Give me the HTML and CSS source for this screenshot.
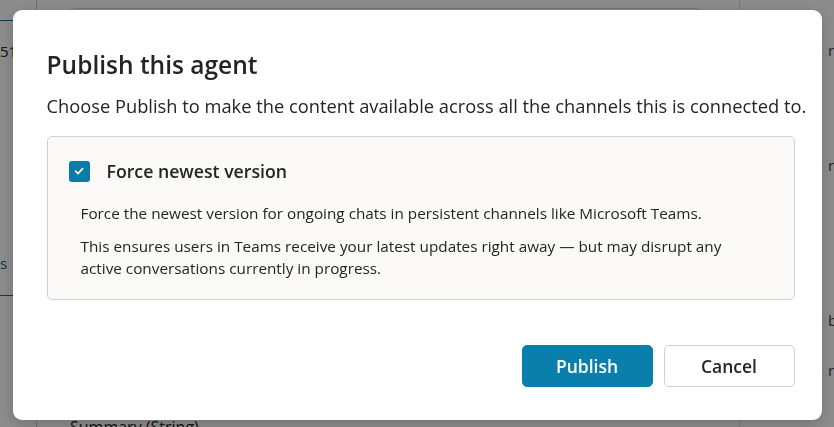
FILE: index.html
```html
<!DOCTYPE html>
<html>
<head>
    <meta charset="utf-8" />
    <title>Publish this agent</title>
    <link rel="stylesheet" href="styles.css">
</head>
<body>
    <!-- page behind the dialog -->
    <div class="pagina">
        <div class="lateral">
            <div class="lateralFila">51</div>
            <div class="lateralFila lateralActiva">s</div>
        </div>
        <div class="principal">
            <div class="tarjeta"></div>
            <div class="resumen">Summary (String)</div>
        </div>
        <div class="derecha">
            <div class="derechaFila">r</div>
            <div class="derechaFila">r</div>
            <div class="derechaFila">b</div>
            <div class="derechaFila">r</div>
        </div>
    </div>

    <div class="fondo">
        <div class="dialogo">
            <h2 class="titulo">Publish this agent</h2>
            <p class="texto">Choose Publish to make the content available across all the channels this is connected to.</p>

            <div class="opcion">
                <label class="opcionCabecera">
                    <span class="check">
                        <svg width="12" height="12" viewBox="0 0 12 12"><path d="M2.5 6.2 L5 8.6 L9.6 3.6" fill="none" stroke="#ffffff" stroke-width="1.6" stroke-linecap="round" stroke-linejoin="round"/></svg>
                    </span>
                    <span class="opcionTitulo">Force newest version</span>
                </label>
                <p class="opcionTexto">Force the newest version for ongoing chats in persistent channels like Microsoft Teams.</p>
                <p class="opcionTexto">This ensures users in Teams receive your latest updates right away — but may disrupt any active conversations currently in progress.</p>
            </div>

            <div class="botones">
                <button class="boton botonPrimario">Publish</button>
                <button class="boton">Cancel</button>
            </div>
        </div>
    </div>
</body>
</html>
```

FILE: styles.css
```css
body {
    margin: 0;
    font-family: "Open Sans", "Noto Sans", sans-serif;
    background-color: #ffffff;
    height: 427px;
    overflow: hidden;
}

.pagina {
    display: flex;
    height: 427px;
}
.lateral {
    width: 36px;
    border-right: 1px solid #c8c8c8;
    padding-top: 20px;
}
.lateralFila {
    border-top: 1px solid #0f6c8c;
    height: 90px;
    padding-top: 20px;
    font-size: 15px;
    color: #242424;
}
.lateralActiva {
    margin-top: 94px;
    padding-top: 28px;
    height: 42px;
    color: #0f6c8c;
    border-top: none;
    border-bottom: 1px solid #0f6c8c;
}
.principal {
    flex: 1;
    padding: 8px 36px 0 30px;
    display: flex;
    flex-direction: column;
}
.tarjeta {
    flex: 1;
    border: 1px solid #d0d0d0;
    border-radius: 8px;
}
.resumen {
    padding: 16px 0 0 3px;
    font-size: 16px;
    line-height: 22px;
    color: #242424;
    height: 11px;
    overflow: hidden;
}
.derecha {
    width: 95px;
    border-left: 1px solid #e0e0e0;
    padding-left: 88px;
    padding-top: 40px;
    box-sizing: border-box;
}
.derechaFila {
    height: 115px;
    font-size: 15px;
    color: #424242;
}
.derechaFila:nth-child(2) {
    height: 155px;
}
.derechaFila:nth-child(3) {
    height: 50px;
}
.derechaFila:nth-child(4) {
    height: 22px;
}

.fondo {
    position: fixed;
    top: 0;
    left: 0;
    right: 0;
    bottom: 0;
    background-color: rgba(0, 0, 0, 0.45);
    display: flex;
    align-items: center;
    justify-content: center;
}
.dialogo {
    width: 809px;
    height: 410px;
    box-sizing: border-box;
    background-color: #ffffff;
    border-radius: 9px;
    padding: 39px 27px 0 34px;
    margin-top: 3px;
    box-shadow: 0 4px 16px rgba(0, 0, 0, 0.2);
}
.titulo {
    margin: 0;
    font-size: 24.5px;
    font-weight: 600;
    color: #242424;
    line-height: 32px;
}
.texto {
    margin: 13px 0 0 0;
    font-size: 18.3px;
    color: #242424;
    line-height: 24px;
    white-space: nowrap;
}
.opcion {
    margin-top: 18px;
    background-color: #faf9f8;
    border: 1px solid #d1d1d1;
    border-radius: 5px;
    padding: 22px 20px 20px 21px;
}
.opcionCabecera {
    display: flex;
    align-items: center;
    height: 24px;
}
.check {
    width: 21px;
    height: 21px;
    background-color: #0b7ba8;
    border-radius: 3px;
    display: flex;
    align-items: center;
    justify-content: center;
    margin-right: 17px;
}
.opcionTitulo {
    font-size: 17.7px;
    font-weight: 600;
    color: #242424;
}
.opcionTexto {
    margin: 11px 0 0 12px;
    max-width: 655px;
    font-size: 15.3px;
    color: #242424;
    line-height: 22px;
}
.opcionCabecera + .opcionTexto {
    margin-top: 19px;
    white-space: nowrap;
}
.botones {
    display: flex;
    justify-content: flex-end;
    gap: 11px;
    margin-top: 45px;
}
.boton {
    width: 131px;
    height: 42px;
    border: 1px solid #d1d1d1;
    border-radius: 5px;
    background-color: #ffffff;
    font-family: "Open Sans", "Noto Sans", sans-serif;
    font-size: 17.5px;
    font-weight: 600;
    color: #242424;
}
.botonPrimario {
    background-color: #0b7fab;
    border-color: #0b7fab;
    color: #ffffff;
}
```
